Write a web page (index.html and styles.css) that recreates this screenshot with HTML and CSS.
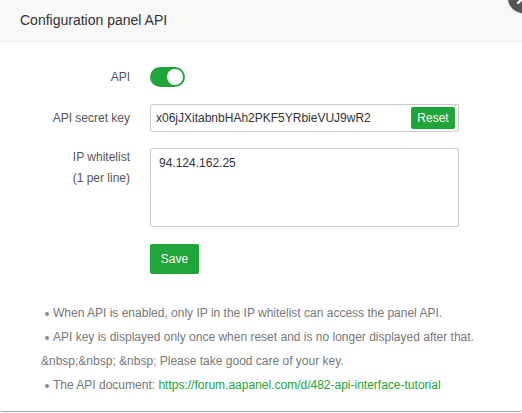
FILE: index.html
```html
<!DOCTYPE html>
<html>
<head>
<meta charset="utf-8">
<link rel="stylesheet" href="styles.css">
</head>
<body>
<div class="layer">
  <div class="layer-title">Configuration panel API</div>
  <span class="layer-close" aria-label="close">
    <svg viewBox="0 0 30 30" width="30" height="30"><path d="M10 10 L20 20 M20 10 L10 20" stroke="#fff" stroke-width="2.4" stroke-linecap="round"/></svg>
  </span>
  <div class="layer-content">
    <div class="form-row row-api">
      <div class="form-label">API</div>
      <div class="form-field">
        <span class="switch"><span class="knob"></span></span>
      </div>
    </div>
    <div class="form-row row-key">
      <div class="form-label">API secret key</div>
      <div class="form-field">
        <div class="key-box">
          <span class="key-text">x06jJXitabnbHAh2PKF5YRbieVUJ9wR2</span>
          <button class="btn btn-sm">Reset</button>
        </div>
      </div>
    </div>
    <div class="form-row row-ip">
      <div class="form-label label-multi">IP whitelist<br>(1 per line)</div>
      <div class="form-field">
        <div class="textarea">94.124.162.25</div>
      </div>
    </div>
    <div class="form-row row-save">
      <div class="form-label"></div>
      <div class="form-field">
        <button class="btn btn-save">Save</button>
      </div>
    </div>
    <ul class="notes">
      <li>When API is enabled, only IP in the IP whitelist can access the panel API.</li>
      <li>API key is displayed only once when reset and is no longer displayed after that.<br><span class="cont">&amp;nbsp;&amp;nbsp; &amp;nbsp; Please take good care of your key.</span></li>
      <li>The API document: <a href="#" class="link">https://forum.aapanel.com/d/482-api-interface-tutorial</a></li>
    </ul>
  </div>
</div>
</body>
</html>
```
FILE: styles.css
```css
html, body {
  margin: 0;
  padding: 0;
  overflow: hidden;
  background: #fff;
}
body {
  font-family: "Liberation Sans", Arial, sans-serif;
  font-size: 12px;
  color: #555;
}
.layer {
  position: relative;
  width: 522px;
  height: 411px;
  background: #fff;
  border-bottom: 1px solid #a3a3a3;
  border-radius: 0 0 2px 2px;
}
.layer-title {
  height: 41px;
  line-height: 41px;
  padding: 0 20px;
  background: #f8f8f8;
  border-bottom: 1px solid #eee;
  font-size: 14px;
  color: #333;
}
.layer-close {
  position: absolute;
  right: -16px;
  top: -17px;
  width: 30px;
  height: 30px;
  border-radius: 50%;
  background: #555;
  box-shadow: 0 0 0 1px #ddd;
}
.layer-close svg { display: block; }
.layer-content {
  padding-top: 21px;
}
.form-row {
  display: flex;
  align-items: center;
}
.form-label {
  width: 130px;
  text-align: right;
  color: #555;
  flex: none;
}
.form-field {
  margin-left: 20px;
}
.row-api { height: 28px; }
.row-key { height: 28px; margin-top: 13px; }
.row-ip { align-items: flex-start; margin-top: 16px; }
.label-multi { line-height: 21px; margin-top: -1px; }
.row-save { margin-top: 17px; }
.switch {
  display: block;
  width: 35px;
  height: 20px;
  border-radius: 10px;
  background: #20a53a;
  position: relative;
}
.knob {
  position: absolute;
  right: 2px;
  top: 2px;
  width: 16px;
  height: 16px;
  border-radius: 50%;
  background: #fff;
}
.key-box {
  box-sizing: border-box;
  width: 309px;
  height: 28px;
  border: 1px solid #ccc;
  border-radius: 2px;
  display: flex;
  align-items: center;
  justify-content: space-between;
  padding: 0 3px 0 5px;
}
.key-text { color: #333; }
.btn {
  border: none;
  background: #20a53a;
  color: #fff;
  font-family: "Liberation Sans", Arial, sans-serif;
  border-radius: 2px;
  cursor: pointer;
  padding: 0;
}
.btn-sm {
  width: 44px;
  height: 22px;
  font-size: 12px;
}
.btn-save {
  display: block;
  width: 49px;
  height: 30px;
  font-size: 12px;
}
.textarea {
  box-sizing: border-box;
  width: 309px;
  height: 79px;
  border: 1px solid #ccc;
  border-radius: 2px;
  padding: 6px 8px;
  line-height: 16px;
  color: #333;
}
.notes {
  list-style: none;
  margin: 27px 0 0 41px;
  padding: 0;
  color: #777;
  line-height: 24px;
}
.notes li {
  position: relative;
  padding-left: 12px;
}
.notes li::before {
  content: "";
  position: absolute;
  left: 4px;
  top: 11px;
  width: 4px;
  height: 4px;
  border-radius: 50%;
  background: #888;
}
.notes .cont {
  margin-left: -12px;
}
.link {
  color: #20a53a;
  text-decoration: none;
}
```
